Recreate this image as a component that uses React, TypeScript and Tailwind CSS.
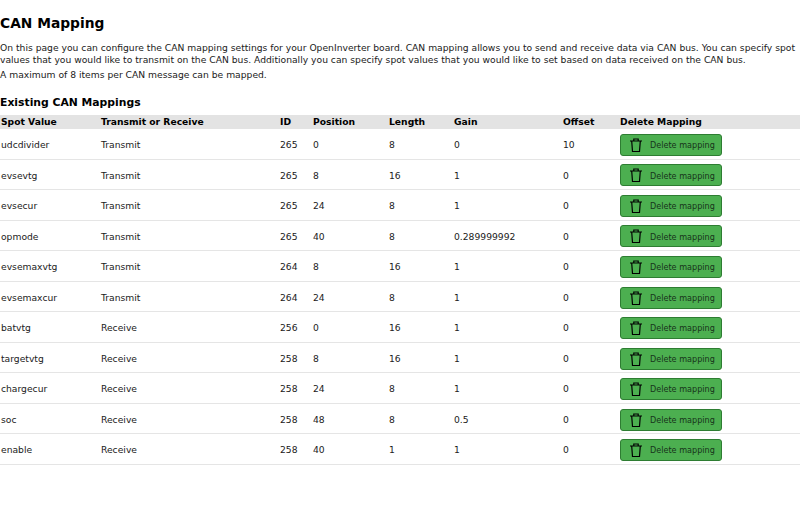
const rows = [
  ["udcdivider", "Transmit", "265", "0", "8", "0", "10"],
  ["evsevtg", "Transmit", "265", "8", "16", "1", "0"],
  ["evsecur", "Transmit", "265", "24", "8", "1", "0"],
  ["opmode", "Transmit", "265", "40", "8", "0.289999992", "0"],
  ["evsemaxvtg", "Transmit", "264", "8", "16", "1", "0"],
  ["evsemaxcur", "Transmit", "264", "24", "8", "1", "0"],
  ["batvtg", "Receive", "256", "0", "16", "1", "0"],
  ["targetvtg", "Receive", "258", "8", "16", "1", "0"],
  ["chargecur", "Receive", "258", "24", "8", "1", "0"],
  ["soc", "Receive", "258", "48", "8", "0.5", "0"],
  ["enable", "Receive", "258", "40", "1", "1", "0"],
];
const heads = ["Spot Value", "Transmit or Receive", "ID", "Position", "Length", "Gain", "Offset", "Delete Mapping"];
const widths = ["w-[100px]", "w-[179px]", "w-[33px]", "w-[76px]", "w-[65px]", "w-[109px]", "w-[58px]", "w-[180px]"];

function Trash() {
  return (
    <svg width="16" height="16" viewBox="0 0 16 16" fill="none" stroke="#000" strokeWidth="1.2" className="shrink-0">
      <path d="M2 4h12M5.8 4V2h4.4v2M3.7 4l.8 10.5h7L12.3 4" />
    </svg>
  );
}

export default function App() {
  return (
    <div className="w-[800px] h-[524px] bg-white overflow-hidden text-[#212121] text-[9.2px] leading-[11.5px] font-['DejaVu_Sans',sans-serif]">
      <h1 className="pt-[14px] text-[13.8px] leading-[18px] font-bold text-black">CAN Mapping</h1>
      <p className="mt-[10px]">
        On this page you can configure the CAN mapping settings for your OpenInverter board. CAN mapping allows you to send and receive data via CAN bus. You can specify spot values that you would like to transmit on the CAN bus. Additionally you can specify spot values that you would like to set based on data received on the CAN bus.
      </p>
      <p className="mt-[4px]">A maximum of 8 items per CAN message can be mapped.</p>
      <h2 className="mt-[15px] text-[10.8px] leading-[14px] font-bold text-black">Existing CAN Mappings</h2>
      <table className="mt-[5px] w-[800px] table-fixed border-collapse">
        <thead>
          <tr className="bg-[#e3e3e3] h-[14px] text-black">
            {heads.map((h, i) => (
              <th key={h} className={`${widths[i]} p-0 pt-[1px] ${i === 7 ? "" : "pl-[1px]"} text-left font-bold`}>{h}</th>
            ))}
          </tr>
        </thead>
        <tbody>
          {rows.map((r) => (
            <tr key={r[0]} className="h-[30.55px] border-b border-[#e5e5e5]">
              {r.map((c, i) => (
                <td key={i} className="p-0 pt-[2px] pl-[1px]">{c}</td>
              ))}
              <td className="p-0 pt-[2px]">
                <button className="flex items-center w-[102px] h-[22px] pl-[7px] gap-[6px] bg-[#4caf50] border border-[#2e7d32] rounded-[3px] text-[8.1px] whitespace-nowrap text-[#17331a]">
                  <Trash />
                  <span className="pt-[2px]">Delete mapping</span>
                </button>
              </td>
            </tr>
          ))}
        </tbody>
      </table>
    </div>
  );
}
